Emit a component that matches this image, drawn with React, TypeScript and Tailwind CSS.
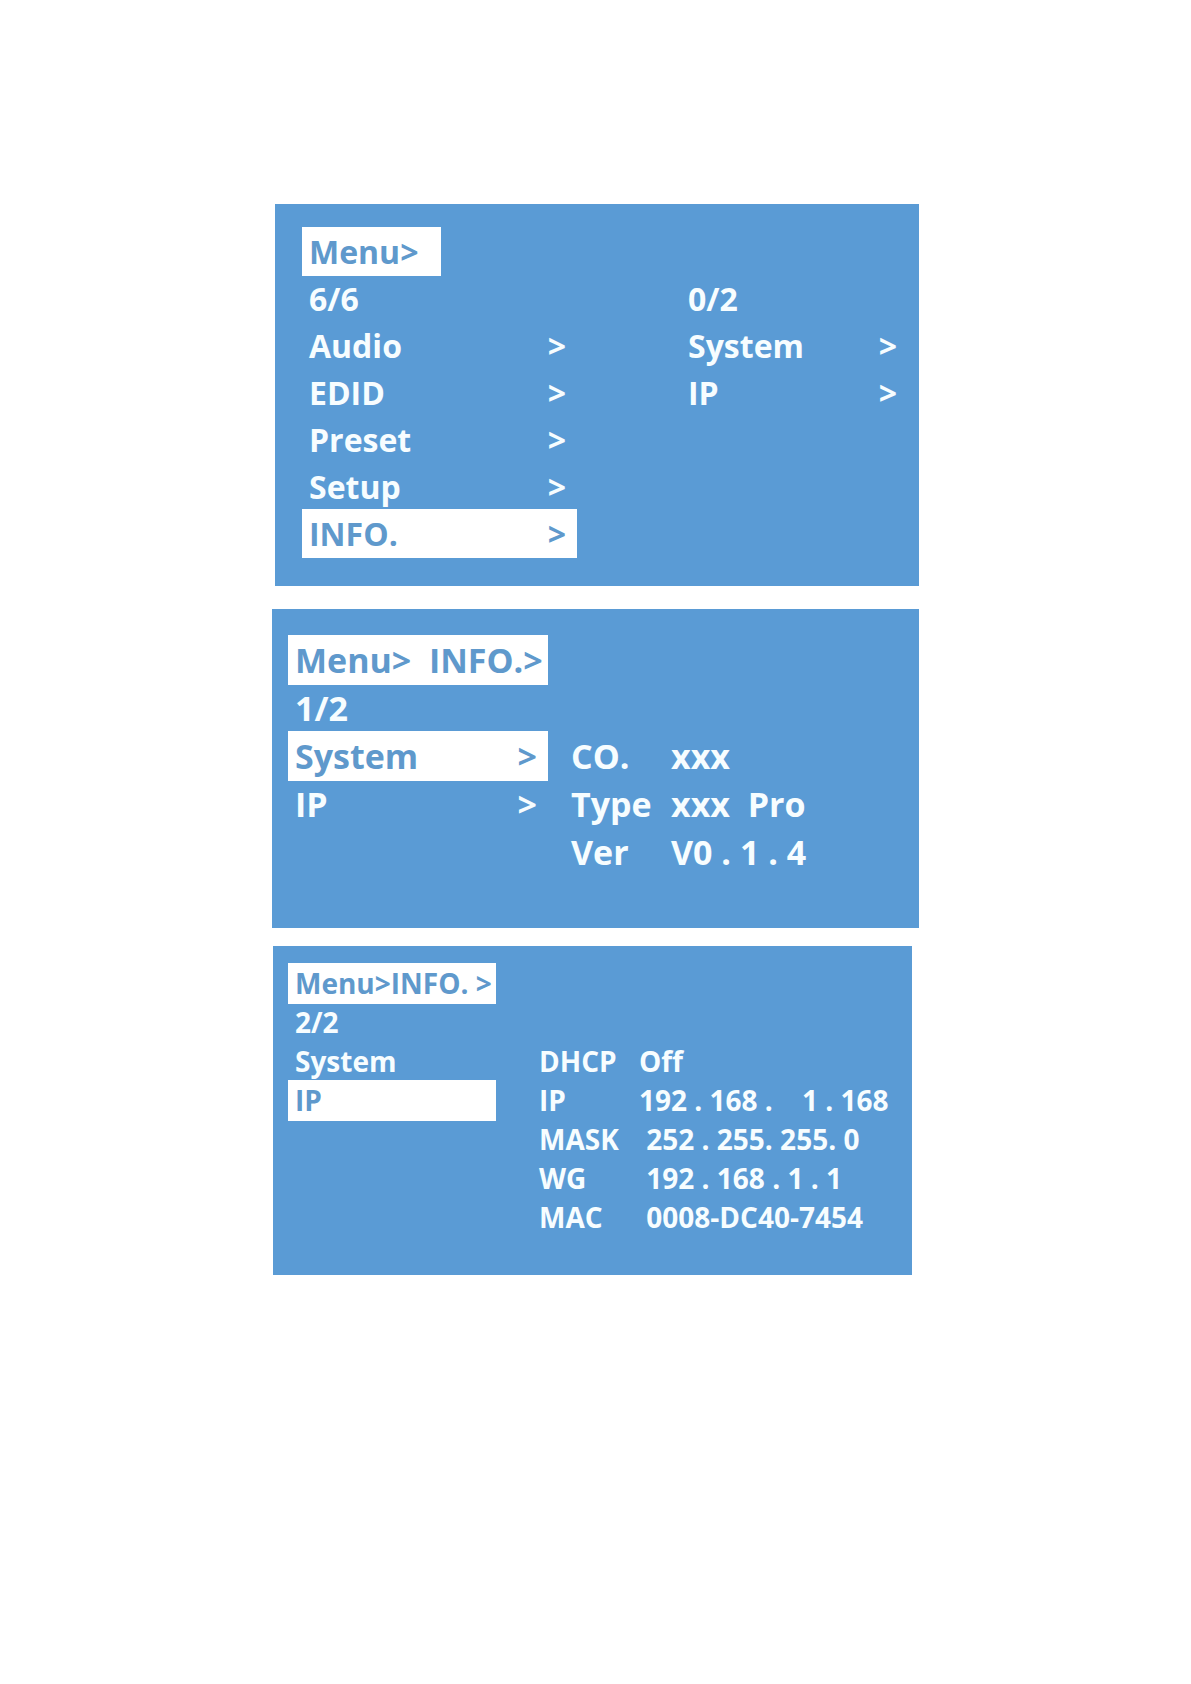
import type { ReactNode } from "react";

type Item = { label: string; arrow?: boolean; active?: boolean };

function Screen({ className, children }: { className: string; children: ReactNode }) {
  return (
    <section className={`flex items-start bg-[#5a9bd5] font-bold text-[#f7fdff] ${className}`}>
      {children}
    </section>
  );
}

function Crumb({ children, className = "" }: { children: ReactNode; className?: string }) {
  return (
    <h2 className={`whitespace-pre bg-white pl-1.5 text-[#5f99cc] ring-1 ring-white ${className}`}>
      {children}
    </h2>
  );
}

function Menu({ count, items }: { count: string; items: Item[] }) {
  return (
    <>
      <p className="pl-1.5">{count}</p>
      <ul>
        {items.map((item) => (
          <li key={item.label}>
            <button
              type="button"
              className={`flex w-full justify-between pr-2.5 pl-1.5 text-left ${
                item.active ? "bg-white text-[#5f99cc] ring-1 ring-white" : ""
              }`}
            >
              <span>{item.label}</span>
              {item.arrow && <span>&gt;</span>}
            </button>
          </li>
        ))}
      </ul>
    </>
  );
}

function Details({ rows, className }: { rows: [string, string][]; className: string }) {
  return (
    <dl className={`grid whitespace-pre ${className}`}>
      {rows.map(([name, value]) => (
        <div key={name} className="contents">
          <dt>{name}</dt>
          <dd>{value}</dd>
        </div>
      ))}
    </dl>
  );
}

export default function App() {
  return (
    <main className="min-h-screen bg-white px-4 pt-[204px] pb-16 font-['Open_Sans','Noto_Sans',sans-serif]">
      <div className="mx-auto max-w-[647px]">
        <Screen className="ml-[3px] justify-between pt-6 pr-3 pb-[29px] pl-7 text-[32px] leading-[47px]">
          <div className="w-[273px]">
            <Crumb className="w-[137px]">Menu&gt;</Crumb>
            <Menu
              count="6/6"
              items={[
                { label: "Audio", arrow: true },
                { label: "EDID", arrow: true },
                { label: "Preset", arrow: true },
                { label: "Setup", arrow: true },
                { label: "INFO.", arrow: true, active: true },
              ]}
            />
          </div>
          <div className="mt-[47px] w-[225px]">
            <Menu
              count="0/2"
              items={[
                { label: "System", arrow: true },
                { label: "IP", arrow: true },
              ]}
            />
          </div>
        </Screen>

        <Screen className="mt-[23px] gap-6 pt-[27px] pb-[52px] pl-[17px] text-[34px] leading-[48px]">
          <div className="w-[258px]">
            <Crumb>Menu&gt;{"  "}INFO.&gt;</Crumb>
            <Menu
              count="1/2"
              items={[
                { label: "System", arrow: true, active: true },
                { label: "IP", arrow: true },
              ]}
            />
          </div>
          <Details
            className="mt-24 grid-cols-[100px_auto]"
            rows={[
              ["CO.", "xxx"],
              ["Type", "xxx  Pro"],
              ["Ver", "V0 . 1 . 4"],
            ]}
          />
        </Screen>

        <Screen className="mt-[18px] mr-[7px] ml-px gap-11 pt-[18px] pb-[38px] pl-4 text-[28px] leading-[39px]">
          <div className="w-[206px]">
            <Crumb>Menu&gt;INFO. &gt;</Crumb>
            <Menu count="2/2" items={[{ label: "System" }, { label: "IP", active: true }]} />
          </div>
          <Details
            className="mt-[78px] grid-cols-[100px_auto]"
            rows={[
              ["DHCP", "Off"],
              ["IP", "192 . 168 .    1 . 168"],
              ["MASK", " 252 . 255. 255. 0"],
              ["WG", " 192 . 168 . 1 . 1"],
              ["MAC", " 0008-DC40-7454"],
            ]}
          />
        </Screen>
      </div>
    </main>
  );
}
